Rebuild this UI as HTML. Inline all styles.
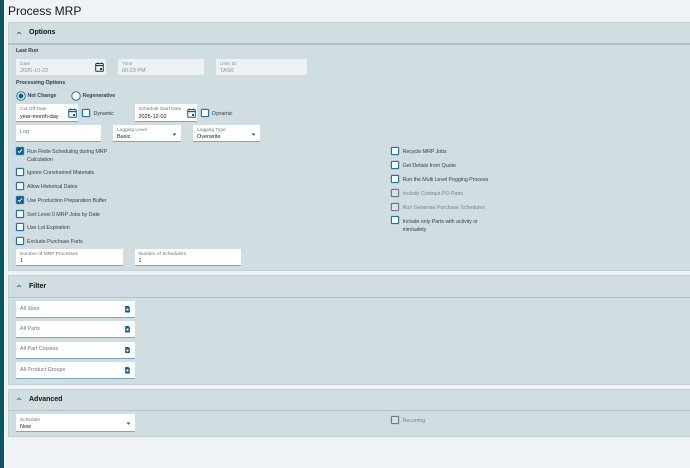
<!DOCTYPE html>
<html><head><meta charset="utf-8">
<style>
html,body{margin:0;padding:0}
body{width:690px;height:468px;overflow:hidden;position:relative;background:#eff3f5;font-family:"Liberation Sans",sans-serif;color:#3c4650}
div,span,svg{position:absolute;box-sizing:border-box}
.sec{left:8px;width:682px;background:#d0dde1;border:1px solid #c3d0d5;border-right:0}
.hd{left:8px;width:682px;height:1.5px;background:#b4c2c8}
.st{left:29px;font-size:7px;font-weight:bold;color:#111;white-space:nowrap}
.chev{left:16px;width:6px;height:4px}
.lb{font-size:5.3px;font-weight:bold;letter-spacing:-.05px;color:#333c44;white-space:nowrap}
.f{background:#fff;border-bottom:1px solid #77a7c2}
.d{background:#eef1f3;border-bottom:0}
.s{left:4px;top:2.5px;font-size:4.8px;color:#6d747a;white-space:nowrap}
.v{left:4px;top:9px;font-size:5.5px;color:#222;white-space:nowrap}
.d .s,.d .v{color:#8b9196}
.ph{left:4px;top:4.5px;font-size:5.4px;color:#6f767c;white-space:nowrap}
.c{width:8px;height:8px;background:#fff;border:1px solid #1b74a8;border-radius:1px;box-shadow:0 0 0 .5px #9cc0d6}
.c.on{background:#0d5c92}
.c.off{background:#d9e1e4;border-color:#6f7a80;box-shadow:0 0 0 .5px #b4bfc4}
.t{font-size:5.4px;letter-spacing:-.08px;line-height:8px;color:#3a434b;white-space:nowrap}
.t.g{color:#7d878d}
.ck{left:0;top:0;width:6px;height:6px}
</style></head><body>
<div style="left:0;top:0;width:3.5px;height:468px;background:#0b5468"></div>
<div style="left:3.5px;top:0;width:1.5px;height:468px;background:#fff"></div>
<div style="left:8px;top:2px;font-size:12px;line-height:18px;color:#151515;white-space:nowrap">Process MRP</div>

<div class="sec" style="top:22px;height:249px"></div>
<div class="hd" style="top:43px"></div>
<svg class="chev" style="top:31px" viewBox="0 0 6 4"><path d="M1 3L3 1.200l2 1.800" fill="none" stroke="#1d6f9f" stroke-width=".9"/></svg>
<div class="st" style="top:29px">Options</div>

<div class="lb" style="left:16px;top:48px">Last Run</div>
<div class="f d" style="left:16px;top:59px;width:90px;height:16px"><div class="s">Date</div><div class="v">2025-10-22</div>
<svg style="left:79px;top:3px;width:9px;height:10px" viewBox="0 0 9 10"><rect x=".7" y="1.500" width="7.600" height="7.800" rx=".8" fill="none" stroke="#333" stroke-width="1"/><path d="M.7 3.500h7.600" stroke="#333" stroke-width="1.200"/><path d="M2.500 .5v1.500M6.500 .5v1.500" stroke="#333"/><rect x="5" y="6" width="2" height="2" fill="#333"/></svg></div>
<div class="f d" style="left:118px;top:59px;width:86px;height:16px"><div class="s">Time</div><div class="v">00:23 PM</div></div>
<div class="f d" style="left:216px;top:59px;width:91px;height:16px"><div class="s">User ID</div><div class="v">TASK</div></div>

<div class="lb" style="left:16px;top:80px">Processing Options</div>
<svg style="left:16px;top:90.500px;width:10px;height:10px" viewBox="0 0 10 10"><circle cx="5" cy="5" r="4.200" fill="#fff" stroke="#1b74a8" stroke-width="1"/><circle cx="5" cy="5" r="2.500" fill="#0d5c92"/></svg>
<div class="lb" style="left:27.500px;top:92.500px;color:#3b444c">Net Change</div>
<svg style="left:71px;top:90.500px;width:10px;height:10px" viewBox="0 0 10 10"><circle cx="5" cy="5" r="4.200" fill="#fff" stroke="#1b74a8" stroke-width="1"/></svg>
<div class="lb" style="left:82.500px;top:92.500px;color:#3b444c">Regenerative</div>

<div class="f" style="left:16px;top:104px;width:62px;height:18px;border-bottom-width:1.500px"><div class="s">Cut Off Date</div><div class="v" style="top:10px">year-month-day</div>
<svg style="left:52px;top:4px;width:9px;height:10px" viewBox="0 0 9 10"><rect x=".7" y="1.500" width="7.600" height="7.800" rx=".8" fill="none" stroke="#0d5c92" stroke-width="1"/><path d="M.7 3.500h7.600" stroke="#0d5c92" stroke-width="1.400"/><path d="M2.500 .5v1.500M6.500 .5v1.500" stroke="#0d5c92"/><rect x="5" y="6" width="2" height="2" fill="#0d5c92"/></svg></div>
<div class="c" style="left:82px;top:109px"></div>
<div class="t" style="left:93.500px;top:110px">Dynamic</div>
<div class="f" style="left:134.500px;top:104px;width:62.500px;height:18px;border-bottom-width:1.500px"><div class="s">Schedule Start Date</div><div class="v" style="top:10px">2025-12-02</div>
<svg style="left:52px;top:4px;width:9px;height:10px" viewBox="0 0 9 10"><rect x=".7" y="1.500" width="7.600" height="7.800" rx=".8" fill="none" stroke="#0d5c92" stroke-width="1"/><path d="M.7 3.500h7.600" stroke="#0d5c92" stroke-width="1.400"/><path d="M2.500 .5v1.500M6.500 .5v1.500" stroke="#0d5c92"/><rect x="5" y="6" width="2" height="2" fill="#0d5c92"/></svg></div>
<div class="c" style="left:201px;top:109px"></div>
<div class="t" style="left:212px;top:110px">Dynamic</div>

<div class="f" style="left:16px;top:124.500px;width:85px;height:17px"><div class="ph" style="top:4.500px">Log</div></div>
<div class="f" style="left:113px;top:124.500px;width:68px;height:17px"><div class="s" style="top:3.500px">Logging Level</div><div class="v" style="top:9.500px">Basic</div><svg style="left:59px;top:8px;width:5px;height:3px" viewBox="0 0 5 3"><path d="M.5 .5h4L2.500 2.800z" fill="#0d5c92"/></svg></div>
<div class="f" style="left:193px;top:124.500px;width:67px;height:17px"><div class="s" style="top:3.500px">Logging Type</div><div class="v" style="top:9.500px">Overwrite</div><svg style="left:58px;top:8px;width:5px;height:3px" viewBox="0 0 5 3"><path d="M.5 .5h4L2.500 2.800z" fill="#0d5c92"/></svg></div>

<div class="c on" style="left:16px;top:147px"><svg class="ck" viewBox="0 0 6 6"><path d="M1 3.200l1.400 1.300L5 1.600" fill="none" stroke="#fff" stroke-width="1"/></svg></div>
<div class="t" style="left:27px;top:148px">Run Finite Scheduling during MRP<br>Calculation</div>
<div class="c" style="left:16px;top:168px"></div>
<div class="t" style="left:27px;top:169px">Ignore Constrained Materials</div>
<div class="c" style="left:16px;top:181.500px"></div>
<div class="t" style="left:27px;top:182.500px">Allow Historical Dates</div>
<div class="c on" style="left:16px;top:195.500px"><svg class="ck" viewBox="0 0 6 6"><path d="M1 3.200l1.400 1.300L5 1.600" fill="none" stroke="#fff" stroke-width="1"/></svg></div>
<div class="t" style="left:27px;top:196.500px">Use Production Preparation Buffer</div>
<div class="c" style="left:16px;top:209.500px"></div>
<div class="t" style="left:27px;top:210.500px">Sort Level 0 MRP Jobs by Date</div>
<div class="c" style="left:16px;top:223px"></div>
<div class="t" style="left:27px;top:224px">Use Lot Expiration</div>
<div class="c" style="left:16px;top:237px"></div>
<div class="t" style="left:27px;top:238px">Exclude Purchase Parts</div>

<div class="f" style="left:16px;top:248.500px;width:107px;height:17px"><div class="s" style="top:3.500px">Number of MRP Processes</div><div class="v" style="top:9.500px">1</div></div>
<div class="f" style="left:134.500px;top:248.500px;width:106.500px;height:17px"><div class="s" style="top:3.500px">Number of Schedulers</div><div class="v" style="top:9.500px">1</div></div>

<div class="c" style="left:391px;top:147px"></div>
<div class="t" style="left:402.500px;top:148px">Recycle MRP Jobs</div>
<div class="c" style="left:391px;top:161px"></div>
<div class="t" style="left:402.500px;top:162px">Get Details from Quote</div>
<div class="c" style="left:391px;top:175px"></div>
<div class="t" style="left:402.500px;top:176px">Run the Multi Level Pegging Process</div>
<div class="c off" style="left:391px;top:188.500px"></div>
<div class="t g" style="left:402.500px;top:190px">Include Contract PO Parts</div>
<div class="c off" style="left:391px;top:202.500px"></div>
<div class="t g" style="left:402.500px;top:204px">Run Generate Purchase Schedules</div>
<div class="c" style="left:391px;top:216px"></div>
<div class="t" style="left:402.500px;top:217.500px">Include only Parts with activity or<br>min/safety</div>

<div class="sec" style="top:275px;height:110px"></div>
<div class="hd" style="top:296.500px"></div>
<svg class="chev" style="top:284px" viewBox="0 0 6 4"><path d="M1 3L3 1.200l2 1.800" fill="none" stroke="#1d6f9f" stroke-width=".9"/></svg>
<div class="st" style="top:283px">Filter</div>

<div class="f" style="left:16px;top:301px;width:119px;height:17px"><div class="ph">All Sites</div><svg style="left:109px;top:5px;width:5px;height:6.500px" viewBox="0 0 5 7"><path d="M0 0h3.500L5 1.500V7H0z" fill="#0d5c92"/><circle cx="2.500" cy="3.800" r="1.200" fill="#fff"/></svg></div>
<div class="f" style="left:16px;top:321px;width:119px;height:17px"><div class="ph">All Parts</div><svg style="left:109px;top:5px;width:5px;height:6.500px" viewBox="0 0 5 7"><path d="M0 0h3.500L5 1.500V7H0z" fill="#0d5c92"/><circle cx="2.500" cy="3.800" r="1.200" fill="#fff"/></svg></div>
<div class="f" style="left:16px;top:341.500px;width:119px;height:17.500px"><div class="ph">All Part Classes</div><svg style="left:109px;top:5px;width:5px;height:6.500px" viewBox="0 0 5 7"><path d="M0 0h3.500L5 1.500V7H0z" fill="#0d5c92"/><circle cx="2.500" cy="3.800" r="1.200" fill="#fff"/></svg></div>
<div class="f" style="left:16px;top:362px;width:119px;height:17px"><div class="ph">All Product Groups</div><svg style="left:109px;top:5px;width:5px;height:6.500px" viewBox="0 0 5 7"><path d="M0 0h3.500L5 1.500V7H0z" fill="#0d5c92"/><circle cx="2.500" cy="3.800" r="1.200" fill="#fff"/></svg></div>

<div class="sec" style="top:389px;height:48px"></div>
<div class="hd" style="top:409.500px"></div>
<svg class="chev" style="top:397px" viewBox="0 0 6 4"><path d="M1 3L3 1.200l2 1.800" fill="none" stroke="#1d6f9f" stroke-width=".9"/></svg>
<div class="st" style="top:396px">Advanced</div>

<div class="f" style="left:16px;top:414px;width:119px;height:17.500px"><div class="s" style="top:3.500px">Schedule</div><div class="v" style="top:9.500px">Now</div><svg style="left:110px;top:8px;width:5px;height:3px" viewBox="0 0 5 3"><path d="M.5 .5h4L2.500 2.800z" fill="#0d5c92"/></svg></div>
<div class="c off" style="left:391px;top:416px"></div>
<div class="t g" style="left:402.500px;top:416.500px">Recurring</div>
</body></html>
